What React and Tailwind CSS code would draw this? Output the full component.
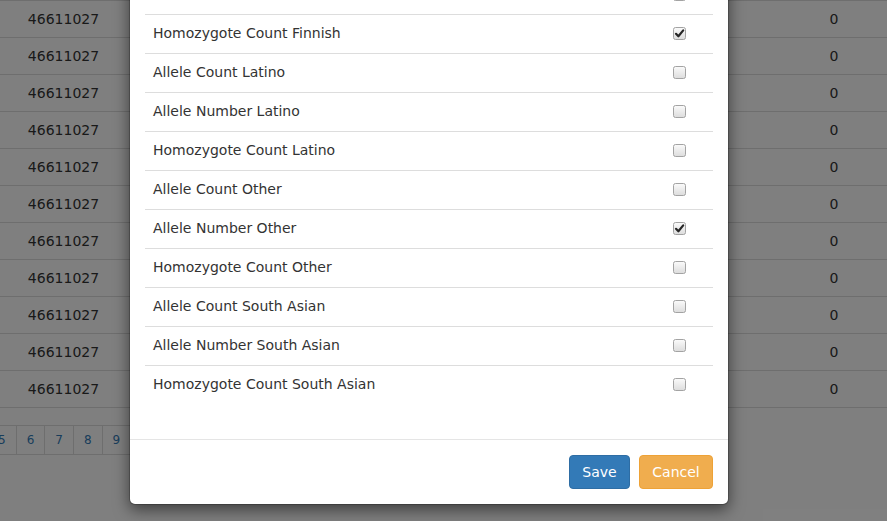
import React from "react";

const bgRows = Array.from({ length: 11 });

const fields = [
  { label: "Allele Number Finnish", checked: false },
  { label: "Homozygote Count Finnish", checked: true },
  { label: "Allele Count Latino", checked: false },
  { label: "Allele Number Latino", checked: false },
  { label: "Homozygote Count Latino", checked: false },
  { label: "Allele Count Other", checked: false },
  { label: "Allele Number Other", checked: true },
  { label: "Homozygote Count Other", checked: false },
  { label: "Allele Count South Asian", checked: false },
  { label: "Allele Number South Asian", checked: false },
  { label: "Homozygote Count South Asian", checked: false },
];

function CheckBox({ checked }) {
  return (
    <svg width="13" height="13" viewBox="0 0 13 13" className="block">
      <defs>
        <linearGradient id="cbg" x1="0" y1="0" x2="0" y2="1">
          <stop offset="0" stopColor="#fbfbfb" />
          <stop offset="1" stopColor="#dcdcdc" />
        </linearGradient>
      </defs>
      <rect x="0.5" y="0.5" width="12" height="12" rx="2" fill="url(#cbg)" stroke="#a3a3a3" />
      {checked && (
        <path d="M3 6.8 L5.4 9.3 L10.2 3.4" fill="none" stroke="#262626" strokeWidth="2.2" strokeLinecap="round" strokeLinejoin="round" />
      )}
    </svg>
  );
}

export default function App() {
  return (
    <div className="relative w-[887px] h-[521px] overflow-hidden bg-white text-[14px] leading-[20px] text-[#333] font-['DejaVu_Sans',sans-serif]">
      {/* Background table */}
      <div className="border-b border-[#ddd]">
        {bgRows.map((_, i) => (
          <div key={i} className="flex h-[37px] items-center border-t border-[#ddd]">
            <div className="w-[127px] text-center">46611027</div>
            <div className="flex-1" />
            <div className="w-[106px] text-center">0</div>
          </div>
        ))}
      </div>

      {/* Pagination */}
      <div className="mt-[17px] ml-[-12px] flex text-[12px] leading-[18px] text-[#337ab7]">
        {["5", "6", "7", "8", "9", "10", "11"].map((n) => (
          <span key={n} className="-ml-px border border-[#ddd] px-[10px] py-[5px]">
            {n}
          </span>
        ))}
      </div>

      {/* Backdrop */}
      <div className="absolute inset-0 bg-black/50" />

      {/* Modal */}
      <div className="absolute left-[129px] top-[-41px] w-[600px] rounded-[6px] border border-black/20 bg-white bg-clip-padding shadow-[0_5px_15px_rgba(0,0,0,0.5)]">
        <div className="px-[15px] pt-[15px] pb-[15px]">
          <div className="mb-[20px]">
            {fields.map((f) => (
              <div key={f.label} className="flex h-[39px] items-center justify-between border-t border-[#ddd] pb-[2px] pl-[8px] pr-[27px]">
                <span>{f.label}</span>
                <CheckBox checked={f.checked} />
              </div>
            ))}
          </div>
        </div>
        <div className="flex justify-end gap-[9px] border-t border-[#e5e5e5] px-[15px] py-[15px]">
          <button className="w-[61px] rounded-[4px] border border-[#2e6da4] bg-[#337ab7] py-[6px] text-center text-white">
            Save
          </button>
          <button className="w-[74px] rounded-[4px] border border-[#eea236] bg-[#f0ad4e] py-[6px] text-center text-white">
            Cancel
          </button>
        </div>
      </div>
    </div>
  );
}
